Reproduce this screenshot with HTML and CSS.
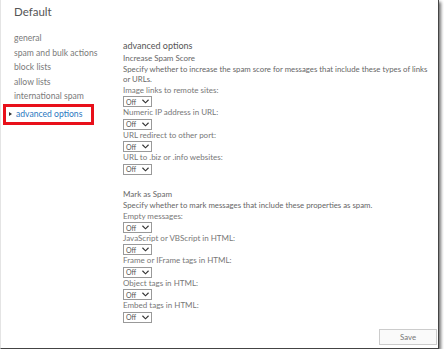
FILE: index.html
```html
<!DOCTYPE html>
<html lang="en">
<head>
  <meta charset="UTF-8" />
  <title>Default - advanced options</title>
  <link rel="stylesheet" href="styles.css">
</head>
<body>
  <div class="frame">
    <div class="header">Default</div>

    <div class="main">
      <!-- left navigation -->
      <ul class="nav">
        <li>general</li>
        <li>spam and bulk actions</li>
        <li>block lists</li>
        <li>allow lists</li>
        <li>international spam</li>
        <li class="active">advanced options</li>
      </ul>

      <!-- settings -->
      <div class="content">
        <div class="section-title">advanced options</div>

        <div class="group">
          <div class="group-title">Increase Spam Score</div>
          <div class="desc">Specify whether to increase the spam score for messages that include these types of links or URLs.</div>

          <div class="field">
            <div class="label">Image links to remote sites:</div>
            <div class="select"><span>Off</span><svg viewBox="0 0 8 5"><path d="M0.5 0.5 L4 4 L7.5 0.5"/></svg></div>
          </div>
          <div class="field">
            <div class="label">Numeric IP address in URL:</div>
            <div class="select"><span>Off</span><svg viewBox="0 0 8 5"><path d="M0.5 0.5 L4 4 L7.5 0.5"/></svg></div>
          </div>
          <div class="field">
            <div class="label">URL redirect to other port:</div>
            <div class="select"><span>Off</span><svg viewBox="0 0 8 5"><path d="M0.5 0.5 L4 4 L7.5 0.5"/></svg></div>
          </div>
          <div class="field">
            <div class="label">URL to .biz or .info websites:</div>
            <div class="select"><span>Off</span><svg viewBox="0 0 8 5"><path d="M0.5 0.5 L4 4 L7.5 0.5"/></svg></div>
          </div>
        </div>

        <div class="group">
          <div class="group-title">Mark as Spam</div>
          <div class="desc">Specify whether to mark messages that include these properties as spam.</div>

          <div class="field">
            <div class="label">Empty messages:</div>
            <div class="select"><span>Off</span><svg viewBox="0 0 8 5"><path d="M0.5 0.5 L4 4 L7.5 0.5"/></svg></div>
          </div>
          <div class="field">
            <div class="label">JavaScript or VBScript in HTML:</div>
            <div class="select"><span>Off</span><svg viewBox="0 0 8 5"><path d="M0.5 0.5 L4 4 L7.5 0.5"/></svg></div>
          </div>
          <div class="field">
            <div class="label">Frame or IFrame tags in HTML:</div>
            <div class="select"><span>Off</span><svg viewBox="0 0 8 5"><path d="M0.5 0.5 L4 4 L7.5 0.5"/></svg></div>
          </div>
          <div class="field">
            <div class="label">Object tags in HTML:</div>
            <div class="select"><span>Off</span><svg viewBox="0 0 8 5"><path d="M0.5 0.5 L4 4 L7.5 0.5"/></svg></div>
          </div>
          <div class="field">
            <div class="label">Embed tags in HTML:</div>
            <div class="select"><span>Off</span><svg viewBox="0 0 8 5"><path d="M0.5 0.5 L4 4 L7.5 0.5"/></svg></div>
          </div>
        </div>
      </div>
    </div>

    <div class="footer">
      <button class="save">Save</button>
    </div>
  </div>
</body>
</html>
```

FILE: styles.css
```css
body {
  margin: 0;
  font-family: Lato, "Noto Sans", sans-serif;
  background: white;
  color: #666;
}
.frame {
  width: 437px;
  height: 348px;
  border-left: 1px solid #e4e4e4;
  border-right: 1px solid #444;
  border-bottom: 1px solid #444;
  box-shadow: 2px 2px 3px rgba(0,0,0,0.55);
  display: flex;
  flex-direction: column;
  overflow: hidden;
}
.header {
  padding: 4px 0 0 13px;
  height: 23px;
  font-size: 11.5px;
  line-height: 16px;
  color: #555;
}
.main {
  display: flex;
  height: 297px;
  overflow: hidden;
}
.nav {
  list-style: none;
  margin: 0;
  padding: 4px 0 0 13px;
  width: 109px;
  flex: none;
  font-size: 8.6px;
  color: #7a7a7a;
}
.nav li {
  line-height: 14.5px;
  white-space: nowrap;
}
.nav li.active {
  margin: 0 0 0 -11px;
  width: 82px;
  border: 3px solid #e8101a;
  line-height: 15px;
  padding-left: 3px;
  color: #2a78c0;
}
.nav li.active::before {
  content: "";
  display: inline-block;
  border-left: 3px solid #333;
  border-top: 2.5px solid transparent;
  border-bottom: 2.5px solid transparent;
  margin-right: 4px;
  vertical-align: 1px;
}
.content {
  padding-top: 12px;
  width: 312px;
  font-size: 8px;
}
.section-title {
  font-size: 9px;
  line-height: 13px;
  color: #555;
}
.group {
  margin-bottom: 13px;
}
.group-title {
  line-height: 12px;
  color: #666;
}
.desc {
  max-width: 306px;
  font-size: 7.8px;
  line-height: 10px;
  margin-bottom: 1px;
}
.label {
  line-height: 11.4px;
  color: #777;
}
.select {
  height: 9px;
  width: 23px;
  border: 1px solid #999;
  display: flex;
  align-items: center;
  justify-content: space-between;
  padding: 0 2px;
  color: #555;
  font-size: 7px;
}
.select svg {
  width: 7px;
  height: 5px;
  fill: none;
  stroke: #333;
  stroke-width: 1.3;
}
.footer {
  display: flex;
  justify-content: flex-end;
  padding: 5px 1px 0 0;
}
.save {
  width: 58px;
  height: 16px;
  border: 1px solid #ccc;
  background: #fafafa;
  color: #777;
  font-family: inherit;
  font-size: 7.8px;
  padding: 0;
}
```
